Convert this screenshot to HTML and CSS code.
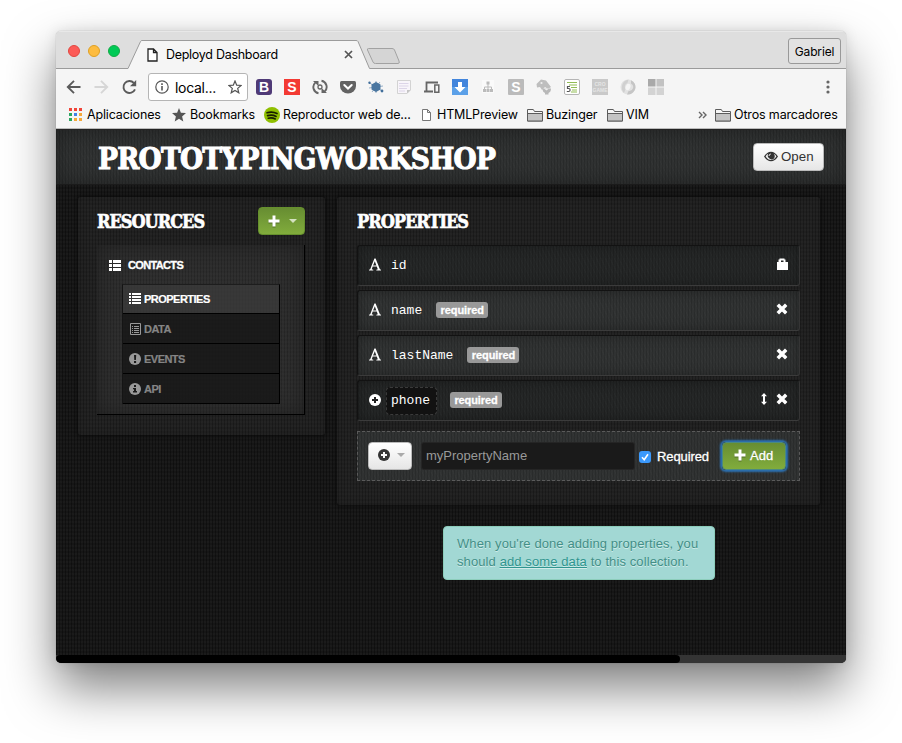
FILE: index.html
```html
<!DOCTYPE html>
<html lang="es">
<head>
<meta charset="utf-8">
<title>Deployd Dashboard</title>
<link rel="stylesheet" href="styles.css">
</head>
<body>
<svg class="defs" width="0" height="0">
  <symbol id="folder" viewBox="0 0 16 14"><path d="M.5 13V1.5h5.8l1.2 2h8V13z" fill="#f6f6f6" stroke="#5c5c5c"/><path d="M1 5.5h14.5V13H1z" fill="#c4c4c4"/><path d="M.5 5.5h15V13H.5z" fill="none" stroke="#5c5c5c"/></symbol>
  <symbol id="remove" viewBox="0 0 12 12"><path d="M1.800 1.800l8.400 8.400m0-8.400l-8.400 8.400" stroke="currentColor" stroke-width="3.500"/></symbol>
  <symbol id="pluscircle" viewBox="0 0 12 12"><circle cx="6" cy="6" r="6" fill="currentColor"/><path class="cut" d="M6 3v6M3 6h6" stroke-width="2"/></symbol>
  <symbol id="plus" viewBox="0 0 12 12"><path d="M6 .5v11M.5 6h11" stroke="currentColor" stroke-width="3"/></symbol>
  <symbol id="letter" viewBox="0 0 12 13"><path d="M0 12.5v-.8l1.200-.4L5.400.5h1.200l4.300 10.800 1.100.4v.8H7.300v-.8l1.500-.4-1-2.700H3.700l-1 2.700 1.600.4v.8zM4.100 7.600h3.300L5.800 3.300z" fill="currentColor"/></symbol>
</svg>
<div class="window">
  <div class="tabstrip">
    <svg class="tabshape" width="790" height="38"><path d="M0 37.500H72L84.500 10.500Q85 9.500 86 9.500H300Q301.500 9.500 302 10.500L313.500 37.500H790V38H0z" fill="#f5f5f5"/><path d="M0 37.500H72L84.500 10.500Q85 9.500 86 9.500H300Q301.500 9.500 302 10.500L313.500 37.500H790" fill="none" stroke="#9b9b9b"/><path d="M312.500 17.500H336Q338 17.500 338.500 19L343 30Q344 32.500 342 32.500H319.500Q317.500 32.500 317 31L311.500 19Q311 17.500 312.500 17.500z" fill="#d5d5d5" stroke="#a2a2a2"/></svg>
    <i class="light red"></i><i class="light yellow"></i><i class="light green"></i>
    <svg class="page" width="11" height="14" viewBox="0 0 11 14"><path d="M1 1h5.500L10 4.500V13H1zM6.500 1v3.500H10" fill="#fff" stroke="#222" stroke-width="1.300"/></svg>
    <span class="tabtitle">Deployd Dashboard</span>
    <svg class="close" width="9" height="9"><path d="M1 1l7 7m0-7L1 8" stroke="#555" stroke-width="1.700"/></svg>
    <span class="user">Gabriel</span>
  </div>
  <div class="toolbar">
    <div class="nav">
      <svg width="15" height="14" viewBox="0 0 15 14"><path d="M14.500 7H2M8 .8L1.800 7 8 13.200" fill="none" stroke="#5a5a5a" stroke-width="1.900"/></svg>
      <svg width="15" height="14" viewBox="0 0 15 14"><path d="M.5 7H13M7 .8L13.200 7 7 13.200" fill="none" stroke="#d6d6d6" stroke-width="1.900"/></svg>
      <svg width="15" height="16" viewBox="0 0 15 16"><path d="M13 10.300A6 6 0 1 1 11.800 3.800" fill="none" stroke="#5a5a5a" stroke-width="1.900"/><path d="M14.200 1v6.200H8z" fill="#5a5a5a"/></svg>
    </div>
    <div class="address">
      <svg width="14" height="14" viewBox="0 0 14 14"><circle cx="7" cy="7" r="6.200" fill="none" stroke="#555" stroke-width="1.200"/><path d="M7 6v4.500M7 3.300v1.600" stroke="#555" stroke-width="1.600"/></svg>
      <span>local...</span>
      <svg width="14" height="14" viewBox="0 0 14 14"><path d="M7 1l1.700 4.200 4.400.3-3.400 2.900 1.100 4.400L7 10.400l-3.800 2.400 1.100-4.400L.9 5.500l4.400-.3z" fill="none" stroke="#555" stroke-width="1.200"/></svg>
    </div>
    <div class="exts">
      <span class="ext boot">B</span>
      <span class="ext style">S</span>
      <svg viewBox="0 0 16 16"><path d="M6.500 14.200A6.200 6.200 0 0 1 3.300 3.600M9.500 1.800A6.200 6.200 0 0 1 12.700 12.400" fill="none" stroke="#666" stroke-width="1.900"/><path d="M1 2h5.500v5zM15 14H9.500V9z" fill="#666"/><circle cx="8" cy="8" r="2" fill="none" stroke="#666" stroke-width="1.300"/></svg>
      <svg viewBox="0 0 16 16"><path d="M1.500 2h13Q16 2 16 3.500V7a8 7.500 0 0 1-16 0V3.500Q0 2 1.500 2z" fill="#636363"/><path d="M4.300 6L8 9.500 11.700 6" fill="none" stroke="#fff" stroke-width="2" stroke-linecap="round"/></svg>
      <svg viewBox="0 0 16 16"><path d="M1 3.500l13 8.500M1 9l14-2M4 13l8-10M8 2v12" stroke="#7d9cba" stroke-width=".8"/><path d="M8 3l4.500 2.500v5L8 13l-4.500-2.500v-5z" fill="#4a76a0"/><circle cx="1.500" cy="3.800" r="1.200" fill="#426f9b"/><circle cx="14" cy="12" r="1.400" fill="#426f9b"/></svg>
      <svg viewBox="0 0 16 16"><path d="M1.500 1.500h13v9.500l-3.500 3.500H1.500z" fill="#f8f5fa" stroke="#d3d3d3"/><path d="M3 4.500h9.500M3 7h9.500M3 9.500h8M3 12h6" stroke="#dcd5e8"/><path d="M11 14.500V11h3.500z" fill="#c4c4c4"/></svg>
      <svg viewBox="0 0 16 16"><path d="M2.500 11.500v-8H14M0 12.500h9" fill="none" stroke="#666" stroke-width="1.800"/><path d="M10.800 6h4v7.200h-4z" fill="none" stroke="#666" stroke-width="1.500"/></svg>
      <svg viewBox="0 0 16 16"><path d="M0 0h16v16H0z" fill="#4285dc"/><path d="M0 8h16v8H0z" fill="#5ba0e8"/><path d="M6 3h4v5h3.500L8 13.500 2.500 8H6z" fill="#fff"/></svg>
      <svg viewBox="0 0 16 16"><path d="M2 1h12v13H2z" fill="#fafafa"/><path d="M8 4v7M4.500 11V8h7v3" fill="none" stroke="#bbb"/><path d="M6.500 2.500h3v3h-3zM3 10h3v3H3zM6.500 10h3v3h-3zM10 10h3v3h-3z" fill="#bbb"/></svg>
      <span class="ext grey">S</span>
      <svg viewBox="0 0 16 16"><path d="M.500 5L5 .500l5 1L15 8l-3 2-3-2-3 3-2-3-3 .500z" fill="#bebebe"/><circle cx="5.500" cy="4" r="1.100" fill="#eee"/><path d="M6.500 9.500h8.500q0 3.500-2.500 4.500v1.500h-3.500V14q-2.500-1-2.500-4.500z" fill="#b8b8b8"/><path d="M8 9.500h5l-2.500 2z" fill="#eee"/></svg>
      <svg viewBox="0 0 16 16"><rect x=".5" y=".5" width="15" height="15" rx="1.500" fill="#fff" stroke="#b5b5b5"/><path d="M3 3.500h10M5 6h8M7 8.500h6M8 11h5M7 13h6" stroke="#92bd55" stroke-width="1.200"/><path d="M6 7.500H3.500v2h1.300q1.300 0 1.300 1.500T4.600 12.500H2.800" fill="none" stroke="#555" stroke-width="1.200"/></svg>
      <span class="ext org">CRO<br>GAME</span>
      <svg viewBox="0 0 16 16"><circle cx="8" cy="8" r="7.500" fill="#e2e2e2"/><path d="M11 1.200A7.500 7.500 0 0 1 7 15.500l1.500-3.500a4 4 0 0 0 2.500-7.500z" fill="#c5c5c5"/><path d="M4 14A8 8 0 0 1 8.500.6L7.500 4a4 4 0 0 0-2 6z" fill="#d0d0d0"/><ellipse cx="8" cy="8" rx="2.300" ry="3.300" fill="#f5f5f5" transform="rotate(25 8 8)"/></svg>
      <svg viewBox="0 0 16 16"><path d="M0 0h7.500v7.500H0z" fill="#a9a9a9"/><path d="M8.500 0H16v7.500H8.500z" fill="#c2c2c2"/><path d="M0 8.500h7.500V16H0zM8.500 8.500H16V16H8.500z" fill="#d3d3d3"/></svg>
    </div>
    <svg class="menu" width="4" height="14"><circle cx="2" cy="2" r="1.600"/><circle cx="2" cy="7" r="1.600"/><circle cx="2" cy="12" r="1.600"/></svg>
  </div>
  <div class="bookmarks">
    <svg class="apps" width="13" height="13"><path d="M0 0h3v3H0zM5 0h3v3H5zM10 0h3v3h-3z" fill="#f04438"/><path d="M0 5h3v3H0zM0 10h3v3H0z" fill="#2ba560"/><path d="M5 5h3v3H5z" fill="#4080e8"/><path d="M10 5h3v3h-3zM5 10h3v3H5zM10 10h3v3h-3z" fill="#f5a93b"/></svg>
    <span class="bm b1">Aplicaciones</span>
    <svg class="star" width="14" height="14" viewBox="0 0 14 14"><path d="M7 0l1.900 4.700 5.100.4-3.900 3.300 1.200 5L7 10.700l-4.300 2.700 1.200-5L0 5.100l5.100-.4z" fill="#555"/></svg>
    <span class="bm b2">Bookmarks</span>
    <svg class="spot" width="16" height="16"><circle cx="8" cy="8" r="8" fill="#8fbf00"/><path d="M3 5.700q5.500-1.700 10 .9M3.600 8.600q4.800-1.300 8.500.8M4.300 11.200q3.800-1 7 .7" fill="none" stroke="#171d00" stroke-width="1.700" stroke-linecap="round"/></svg>
    <span class="bm b3">Reproductor web de...</span>
    <svg class="doc" width="9" height="12"><path d="M.5.500h5l3 3v8h-8zM5.500.500v3h3" fill="#fff" stroke="#777"/></svg>
    <span class="bm b4">HTMLPreview</span>
    <svg class="fold" width="16" height="14"><use href="#folder"/></svg>
    <span class="bm b5">Buzinger</span>
    <svg class="fold" width="16" height="14"><use href="#folder"/></svg>
    <span class="bm b6">VIM</span>
    <svg class="more" width="9" height="8"><path d="M1 1l3 3-3 3M5 1l3 3-3 3" fill="none" stroke="#666" stroke-width="1.400"/></svg>
    <svg class="fold" width="16" height="14"><use href="#folder"/></svg>
    <span class="bm b7">Otros marcadores</span>
  </div>
  <div class="viewport">
    <header class="header denim">
      <h1>PROTOTYPINGWORKSHOP</h1>
      <button class="btn open"><svg width="14" height="11" viewBox="0 0 14 11"><path d="M0 5.500Q3 .8 7 .8t7 4.700Q11 10.200 7 10.200T0 5.500z" fill="#333"/><path d="M1.600 5.500Q2.500 3.500 4.300 2.700a3.800 3.800 0 0 0 5.400 5 3.800 3.800 0 0 0 0-5q1.800.8 2.700 2.800Q10 9 7 9T1.600 5.500z" fill="#f2f2f2"/><path d="M5 5q0-1.800 1.800-2" fill="none" stroke="#f2f2f2"/></svg>Open</button>
    </header>
    <main class="main">
      <section class="panel side">
        <div class="sidehead"><h2 class="h-res">RESOURCES</h2><button class="btn greenbtn drop"><svg class="sh" width="12" height="12"><use href="#plus"/></svg><i class="caret"></i></button></div>
        <div class="resource">
          <div class="rtitle"><svg width="12" height="11"><path d="M0 0h3v3H0zM4 0h8v3H4zM0 4h3v3H0zM4 4h8v3H4zM0 8h3v3H0zM4 8h8v3H4z" fill="#fff"/></svg><span>CONTACTS</span></div>
          <ul class="subs">
            <li class="active"><svg width="12" height="12"><path d="M0 0h2v2H0zM3 0h9v2H3zM0 3h2v2H0zM3 3h9v2H3zM0 6h2v2H0zM3 6h9v2H3zM0 9h2v2H0zM3 9h9v2H3z" fill="#fff"/></svg><span class="s1">PROPERTIES</span></li>
            <li><svg width="12" height="12"><path d="M1.500.500h10v11h-10z" fill="none" stroke="#999"/><path d="M3 3.500h1M5 3.500h5M3 5.500h1M5 5.500h5M3 7.500h1M5 7.500h5M3 9.500h1M5 9.500h5" stroke="#999"/></svg><span class="s2">DATA</span></li>
            <li><svg width="12" height="12"><circle cx="6" cy="6" r="6" fill="#999"/><path d="M5 2h2.200L6.900 7H5.300zM5 8h2.100v2H5z" fill="#1b1b1b"/></svg><span class="s3">EVENTS</span></li>
            <li><svg width="12" height="12"><circle cx="6" cy="6" r="6" fill="#999"/><path d="M5 2h2v2H5zM4 5h3v3h1v1.500H4V8h1V6.300H4z" fill="#1b1b1b"/></svg><span class="s4">API</span></li>
          </ul>
        </div>
      </section>
      <div class="content">
        <section class="panel props">
          <h2 class="h-prop">PROPERTIES</h2>
          <ul class="rows">
            <li class="row denim dark"><svg class="type" width="12" height="13"><use href="#letter"/></svg><code>id</code><span class="tools"><svg width="12" height="12"><path d="M2.500 4V1.500h1v-1h5v1h1V4H12v8H1V4zM5 4h2.500V2.500H5z" fill="#fff" fill-rule="evenodd"/></svg></span></li>
            <li class="row denim"><svg class="type" width="12" height="13"><use href="#letter"/></svg><code>name</code><span class="tag">required</span><span class="tools"><svg width="12" height="12"><use href="#remove"/></svg></span></li>
            <li class="row denim"><svg class="type" width="12" height="13"><use href="#letter"/></svg><code>lastName</code><span class="tag">required</span><span class="tools"><svg width="12" height="12"><use href="#remove"/></svg></span></li>
            <li class="row denim dark"><svg class="type" width="12" height="12"><use href="#pluscircle"/></svg><code class="editable">phone</code><span class="tag">required</span><span class="tools"><svg width="6" height="12"><path d="M3 0l3 3.200H4v5.600h2L3 12 0 8.800h2V3.200H0z" fill="#fff"/></svg><svg width="12" height="12"><use href="#remove"/></svg></span></li>
          </ul>
          <div class="form denim">
            <button class="btn kind"><svg width="12" height="12"><use href="#pluscircle"/></svg><i class="caret"></i></button>
            <div class="field">myPropertyName</div>
            <span class="check"><svg width="12" height="12"><path d="M3 6.300l2.200 2.400L9 3.200" fill="none" stroke="#fff" stroke-width="1.600"/></svg></span>
            <span class="label">Required</span>
            <button class="btn greenbtn add"><svg class="sh" width="12" height="12"><use href="#plus"/></svg>Add</button>
          </div>
        </section>
        <div class="alert"><span class="l1">When you're done adding properties, you</span><br><span class="l2">should <a>add some data</a> to this collection.</span></div>
      </div>
    </main>
    <div class="scroll"><div class="thumb"></div></div>
  </div>
</div>
</body>
</html>
```
FILE: styles.css
```css
* { box-sizing: border-box; }
body { margin: 0; background: #fff; height: 743px; padding: 31px 56px 0; overflow: hidden; font: 13px "Liberation Sans", sans-serif; }
svg { display: block; flex: none; }
.defs { position: absolute; }
ul { list-style: none; margin: 0; padding: 0; }
h1, h2 { margin: 0; font-family: "DejaVu Serif Condensed", "DejaVu Serif", serif; font-stretch: condensed; font-weight: 700; color: #fff; white-space: nowrap; }
.window { width: 790px; height: 632px; border-radius: 5px; overflow: hidden; box-shadow: 0 25px 50px rgba(0,0,0,.5), 0 0 14px rgba(0,0,0,.1), 0 0 1px rgba(0,0,0,.4); background: #f5f5f5; }

.tabstrip, .toolbar, .bookmarks { font-family: Inter, "Open Sans", sans-serif; color: #000; display: flex; align-items: center; white-space: nowrap; }
.tabstrip { height: 38px; background: #dedede; position: relative; padding: 1px 5px 0 12px; box-shadow: inset 0 1px #e8e8e8; }
.tabshape { position: absolute; left: 0; top: 0; }
.tabstrip > :not(.tabshape) { position: relative; }
.light { width: 12px; height: 12px; border-radius: 50%; margin-right: 8px; border: 1px solid; }
.red { background: #fc5b57; border-color: #e2463f; }
.yellow { background: #fdbc40; border-color: #dfa023; }
.green { background: #00ca56; border-color: #13aa46; }
.page { margin: 9px 0 0 19px; }
.tabtitle { width: 113px; margin: 8px 65px 0 8px; font-size: 12.500px; letter-spacing: -.28px; }
.close { margin-top: 8px; }
.user { margin-left: auto; width: 53px; height: 26px; margin-top: 1px; border: 1px solid #999; border-radius: 3px; background: #e2e2e2; line-height: 25px; text-align: center; font-size: 12px; letter-spacing: -.15px; }

.toolbar { height: 36px; padding: 0 16px 0 10px; }
.nav { display: flex; align-items: center; gap: 13px; width: 82px; }
.address { width: 100px; height: 28px; border: 1px solid #b5b5b5; border-radius: 3px; background: #fff; display: flex; align-items: center; padding: 0 5px 0 6px; font-size: 14px; letter-spacing: -.3px; }
.address span { margin-left: 6px; flex: 1; }
.exts { display: flex; gap: 12px; margin-left: 8px; }
.exts svg, .ext { width: 16px; height: 16px; flex: none; }
.ext { font: bold 14px/16px "Liberation Sans", sans-serif; color: #fff; text-align: center; overflow: hidden; }
.boot { background: #4f3a77; border-radius: 3px; }
.style { background: #f33a33; }
.grey { background: #bbb; border-radius: 1px; }
.org { background: #c9c9c9; font-size: 5px; line-height: 6px; padding-top: 2px; color: #e5e5e5; }
.menu { margin-left: auto; fill: #666; }

.bookmarks { height: 24px; padding: 0 0 4px 13px; border-bottom: 1px solid #bbb; font-size: 12.500px; letter-spacing: -.15px; }
.bm { display: block; line-height: 19px; }
.apps { margin-right: 5px; }
.b1 { width: 85px; }
.star { margin-right: 4px; }
.b2 { width: 74px; }
.spot { margin-right: 3px; }
.b3 { width: 139px; }
.doc { margin-right: 6px; }
.b4 { width: 90px; }
.fold { margin-right: 3px; }
.b5 { width: 61px; }
.b6 { width: 72px; }
.more { margin-right: 8px; }

.viewport { height: 534px; display: flex; flex-direction: column; background-color: #161616; background-image: repeating-linear-gradient(90deg, rgba(0,0,0,.34) 0 1px, transparent 1px 3px), repeating-linear-gradient(0deg, rgba(255,255,255,.018) 0 2px, transparent 2px 4px); }
.denim { background-color: #303232; background-image: repeating-linear-gradient(90deg, rgba(0,0,0,.15) 0 1px, transparent 1px 3px), repeating-linear-gradient(63deg, rgba(255,255,255,.015) 0 1px, transparent 1px 4px); }
.header { height: 56px; border-top: 1px solid #222; border-bottom: 1px solid #1b1b1b; box-shadow: inset 0 0 22px rgba(0,0,0,.35); padding: 0 22px 0 42px; display: flex; justify-content: space-between; align-items: center; }
h1 { font-size: 29.500px; line-height: 36px; letter-spacing: -.75px; margin-top: 4px; -webkit-text-stroke: 1px #fff; }
.btn { display: flex; align-items: center; font: 13px "Liberation Sans", sans-serif; color: #333; padding: 0; border: 1px solid #bbb; border-radius: 4px; background: linear-gradient(#fff, #e6e6e6); }
.open { width: 71px; height: 28px; padding: 0 0 2px 10px; gap: 3px; font-size: 13.300px; }
.greenbtn { background: linear-gradient(#678d32, #81ac3c); border-color: #66902d; color: #fff; text-shadow: 0 -1px rgba(0,0,0,.25); }
.sh { filter: drop-shadow(0 1px 0 rgba(0,0,0,.3)); }
.caret { border: 4px solid transparent; border-top-color: #d4e2c0; border-bottom: 0; }
.cut { stroke: var(--cut, #222); }
.kind { --cut: #f7f7f7; }

.main { flex: 1; display: flex; gap: 12px; padding: 12px 26px 0 22px; }
.panel { background: rgba(255,255,255,.045); border-radius: 3px; box-shadow: inset 0 0 8px rgba(0,0,0,.1), 0 0 4px #090909; }
.side { width: 247px; height: 238px; padding: 10px 20px 0 19px; }
.sidehead { display: flex; justify-content: space-between; height: 38px; }
h2 { font-size: 18px; line-height: 30px; letter-spacing: -1px; -webkit-text-stroke: .6px #fff; }
.drop { width: 47px; height: 28px; padding-left: 9px; gap: 9px; }
.resource { height: 170px; border-right: 1px solid #000; border-bottom: 1px solid #000; background: rgba(255,255,255,.06); box-shadow: inset 0 0 22px rgba(20,20,20,.5); padding: 14px 24px 0 12px; font: bold 11px "Liberation Sans", sans-serif; }
.rtitle { display: flex; align-items: center; gap: 7px; height: 12px; color: #fff; letter-spacing: -.65px; -webkit-text-stroke: .3px #fff; }
.subs { margin: 13px 0 0 13px; border: 1px solid #000; border-left-color: #141414; border-top-color: #1d1d1d; border-bottom: 0; }
.subs li { height: 30px; border-bottom: 1px solid #000; background: rgba(24,24,24,.85); display: flex; align-items: center; gap: 3px; padding-left: 6px; color: #858585; letter-spacing: -.52px; -webkit-text-stroke: .2px #858585; }
.subs li:first-child { height: 29px; }
.subs .active { background: rgba(60,60,60,.7); color: #fff; -webkit-text-stroke: .2px #fff; }

.content { width: 483px; }
.props { height: 308px; padding: 10px 20px 0; }
.h-prop { height: 38px; }
.rows { display: flex; flex-direction: column; gap: 4px; }
.row { height: 41px; display: flex; align-items: center; padding: 0 11px 2px; border: 1px solid #121212; border-bottom-color: #3b3b3b; border-right-color: #353535; border-radius: 3px; box-shadow: inset 0 0 12px rgba(0,0,0,.3); color: #fff; }
.dark { background-color: #242626; }
.type { margin-right: 5px; }
code { font: 13px "Liberation Mono", monospace; padding: 2px 7px 0 5px; }
.editable { height: 28px; line-height: 24px; border: 1px dashed #3a3a3a; border-radius: 4px; background: #121212; padding: 1px 6px 0 4px; margin: 2px 5px 0 0; }
.tag { margin: 0 0 0 7px; width: 52px; height: 16px; border-radius: 3px; background: #999; font: bold 11px/16px "Liberation Sans", sans-serif; letter-spacing: -.1px; -webkit-text-stroke: .3px #fff; text-align: center; }
.editable + .tag { margin-left: 8px; }
.tools { margin-left: auto; margin-top: -2px; display: flex; gap: 9px; }
.form { margin-top: 10px; height: 50px; border: 1px dashed #5a5a5a; display: flex; align-items: center; padding: 0 13px 0 10px; }
.kind { width: 44px; height: 28px; padding: 0 0 2px 9px; gap: 7px; }
.kind .caret { border-top-color: #aaa; }
.field { margin-left: 9px; width: 214px; height: 28px; background: #1a1a1a; border: 1px solid #252525; border-radius: 3px; color: #999; line-height: 26px; padding-left: 4px; }
.check { margin-left: 4px; width: 12px; height: 12px; border-radius: 3px; background: #3b99fc; margin-top: 2px; }
.label { margin-left: 6px; width: 58px; color: #fff; -webkit-text-stroke: .3px #fff; letter-spacing: -.1px; }
.add { margin-left: auto; width: 64px; height: 28px; padding: 0 0 2px 11px; gap: 4px; border-color: #4b8a80; box-shadow: 0 0 2px 2px #2c70b0; -webkit-text-stroke: .3px #fff; }
.alert { margin: 21px 0 0 106px; width: 272px; height: 54px; padding: 8px 13px; border: 1px solid #8ccdbb; border-radius: 4px; background: #a2d8d4; color: #438f87; text-shadow: 0 1px rgba(255,255,255,.5); line-height: 18px; white-space: nowrap; letter-spacing: .1px; }
.alert a { color: #2f958f; text-decoration: underline; }
.scroll { height: 8px; background: #343434; }
.thumb { width: 624px; height: 8px; background: #000; border-radius: 4px; }
```
